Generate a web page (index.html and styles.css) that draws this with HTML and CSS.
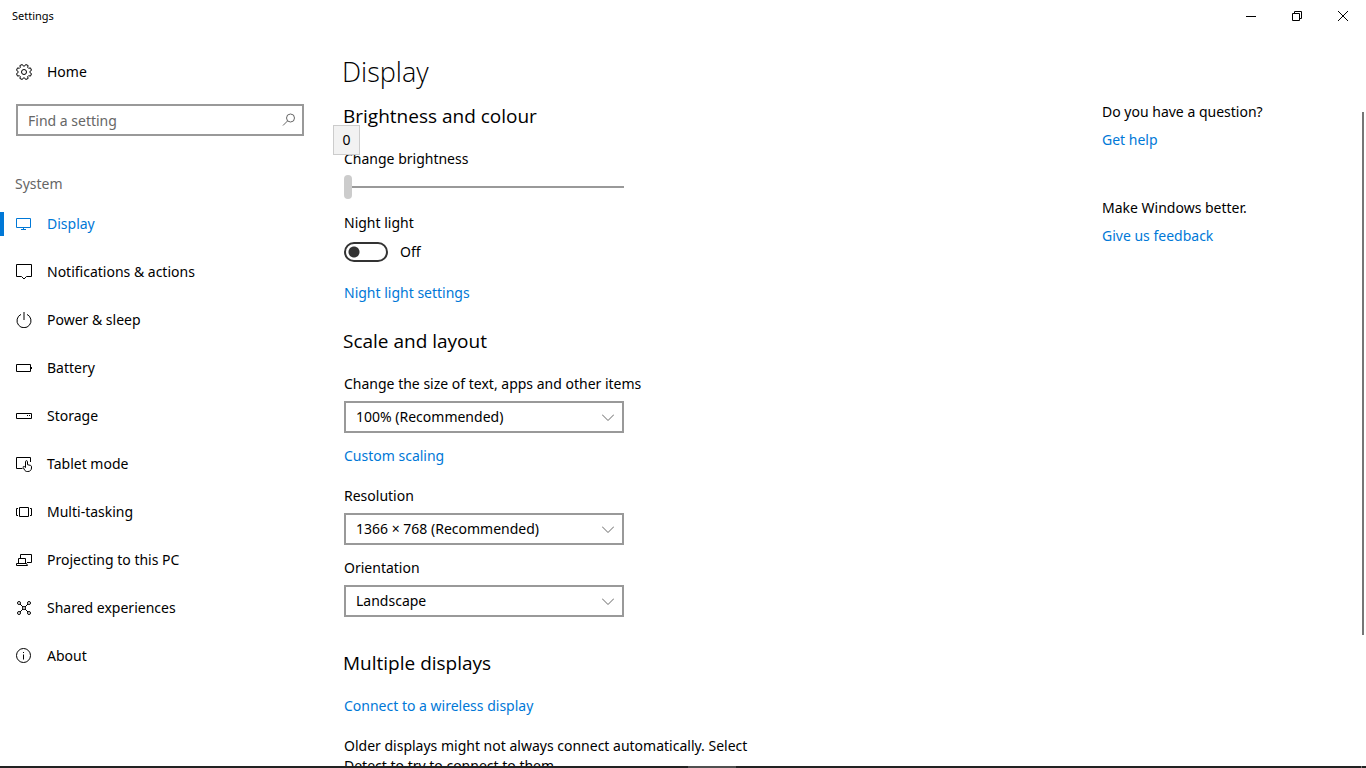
FILE: index.html
```html
<!DOCTYPE html>
<html lang="en-GB">
<head>
    <meta charset="UTF-8">
    <meta name="viewport" content="width=device-width, initial-scale=1.0">
    <title>Settings</title>
    <link rel="stylesheet" href="styles.css">
</head>
<body>
    <header class="titlebar">
        <span class="titlebar-name">Settings</span>
        <div class="window-buttons">
            <button type="button" aria-label="Minimise">
                <svg width="10" height="10" viewBox="0 0 10 10"><path d="M0 5.5h10"/></svg>
            </button>
            <button type="button" aria-label="Restore">
                <svg width="10" height="10" viewBox="0 0 10 10"><path d="M.5 2.5h7v7h-7zM2.5 2.5v-2h7v7h-2"/></svg>
            </button>
            <button type="button" aria-label="Close">
                <svg width="10" height="10" viewBox="0 0 10 10"><path d="M0 0l10 10M10 0L0 10"/></svg>
            </button>
        </div>
    </header>

    <div class="window">
        <aside class="sidebar">
            <a href="#" class="nav-item">
                <svg class="icon" viewBox="0 0 16 16"><path d="M8.6 2.100L9.700.5 12.100 1.500 11.700 3.400 12.600 4.300 14.500 3.900 15.500 6.300 13.900 7.400V8.600L15.500 9.700 14.500 12.100 12.600 11.700 11.700 12.600 12.100 14.500 9.700 15.500 8.600 13.900H7.400L6.300 15.500 3.900 14.500 4.300 12.600 3.400 11.700 1.500 12.100.5 9.700 2.100 8.600V7.400L.5 6.300 1.500 3.900 3.400 4.300 4.300 3.400 3.900 1.500 6.300.5 7.400 2.100z"/><circle cx="8" cy="8" r="2.5"/></svg>
                Home
            </a>
            <div class="search">
                <input type="text" placeholder="Find a setting" aria-label="Find a setting">
                <svg width="14" height="14" viewBox="0 0 14 14"><circle cx="8.5" cy="5" r="4"/><path d="M5.6 7.9L1 12.5"/></svg>
            </div>
            <h2 class="group-name">System</h2>
            <nav>
                <a href="#" class="nav-item active">
                    <svg class="icon" viewBox="0 0 16 16"><path d="M.5 2.5h14v9H.5zM7.5 11.5v2M5 13.5h5"/></svg>
                    Display
                </a>
                <a href="#" class="nav-item">
                    <svg class="icon" viewBox="0 0 16 16"><path d="M.5.5h15v12h-5L8 15l-2.5-2.5h-5z"/></svg>
                    Notifications &amp; actions
                </a>
                <a href="#" class="nav-item">
                    <svg class="icon" viewBox="0 0 16 16"><path d="M5 2.4a7 7 0 1 0 6 0M8 0v8"/></svg>
                    Power &amp; sleep
                </a>
                <a href="#" class="nav-item">
                    <svg class="icon" viewBox="0 0 16 16"><path d="M.5 4.500h14v7H.5zM15.500 7v2"/></svg>
                    Battery
                </a>
                <a href="#" class="nav-item">
                    <svg class="icon" viewBox="0 0 16 16"><path d="M.5 5.500h15v5H.5zM11 7.500h1M13 7.500h1"/></svg>
                    Storage
                </a>
                <a href="#" class="nav-item">
                    <svg class="icon" viewBox="0 0 16 16"><path d="M6.500 12.500h-6V1.500h14v4.500M9.500 11.500V5.700c0-1.400 2-1.400 2 0v3l3 .7c.8.200 1 .7 1 1.400v1.200c0 2-1.500 3.500-3.500 3.500h-.8c-1.200 0-2-.5-2.600-1.500L7.200 11.500c-.4-1 .7-1.600 1.400-.8l.9.8"/></svg>
                    Tablet mode
                </a>
                <a href="#" class="nav-item">
                    <svg class="icon" viewBox="0 0 16 16"><path d="M3.500 3.500h9v9h-9zM2 4.500H.5v7H2M14 4.500h1.500v7H14"/></svg>
                    Multi-tasking
                </a>
                <a href="#" class="nav-item">
                    <svg class="icon" viewBox="0 0 16 16"><path d="M4.500 6V2.500h11v8H11M2.500 12V6.500h7V12M.5 11.500h10l1 2H.5z"/></svg>
                    Projecting to this PC
                </a>
                <a href="#" class="nav-item">
                    <svg class="icon" viewBox="0 0 16 16"><circle cx="3" cy="3" r="1.5"/><circle cx="13" cy="3" r="1.5"/><circle cx="3" cy="13" r="1.5"/><circle cx="13" cy="13" r="1.5"/><circle cx="8" cy="8" r="1.5"/><path d="M4 4l3 3M12 4L9 7M4 12l3-3M12 12L9 9"/></svg>
                    Shared experiences
                </a>
                <a href="#" class="nav-item">
                    <svg class="icon" viewBox="0 0 16 16"><circle cx="7.5" cy="7.5" r="7"/><path d="M7.500 6.500v5M7.500 4v1"/></svg>
                    About
                </a>
            </nav>
        </aside>

        <div class="content">
            <h1>Display</h1>
            <div class="columns">
                <main>
                    <section>
                        <h2>Brightness and colour</h2>
                        <div class="slider">
                            <label for="brightness">Change brightness</label>
                            <input type="range" id="brightness" min="0" max="100" value="0">
                            <output class="tooltip" for="brightness">0</output>
                        </div>
                        <label for="nightLight">Night light</label>
                        <div class="toggle">
                            <input type="checkbox" id="nightLight">
                            <span>Off</span>
                        </div>
                        <a href="#">Night light settings</a>
                    </section>

                    <section>
                        <h2>Scale and layout</h2>
                        <label for="scale">Change the size of text, apps and other items</label>
                        <div class="select">
                            <select id="scale"><option>100% (Recommended)</option></select>
                            <svg width="12" height="7" viewBox="0 0 12 7"><path d="M0 .5l6 6 6-6"/></svg>
                        </div>
                        <a href="#" class="scaling">Custom scaling</a>
                        <label for="resolution">Resolution</label>
                        <div class="select">
                            <select id="resolution"><option>1366 × 768 (Recommended)</option></select>
                            <svg width="12" height="7" viewBox="0 0 12 7"><path d="M0 .5l6 6 6-6"/></svg>
                        </div>
                        <label for="orientation">Orientation</label>
                        <div class="select">
                            <select id="orientation"><option>Landscape</option></select>
                            <svg width="12" height="7" viewBox="0 0 12 7"><path d="M0 .5l6 6 6-6"/></svg>
                        </div>
                    </section>

                    <section>
                        <h2>Multiple displays</h2>
                        <a href="#">Connect to a wireless display</a>
                        <p>Older displays might not always connect automatically. Select Detect to try to connect to them.</p>
                    </section>
                </main>

                <aside class="help">
                    <p>Do you have a question?</p>
                    <a href="#">Get help</a>
                    <p>Make Windows better.</p>
                    <a href="#">Give us feedback</a>
                </aside>
            </div>
        </div>

        <div class="scrollbar"><div class="thumb"></div></div>
    </div>

    <footer class="taskbar"><span class="task"></span><span class="edge"></span></footer>
</body>
</html>
```
FILE: styles.css
```css
* {
    box-sizing: border-box;
}
body {
    display: flex;
    flex-direction: column;
    height: 100vh;
    margin: 0;
    overflow: hidden;
    background: #fff;
    color: #000;
    font: 14px/20px "Noto Sans", "Open Sans", sans-serif;
}
h1, h2, p {
    margin: 0;
    font-weight: 400;
}
a {
    color: #0078d7;
    text-decoration: none;
}
svg {
    fill: none;
    stroke: currentColor;
    stroke-width: 1;
}
input, select, button {
    margin: 0;
    font: inherit;
    color: inherit;
}

/* title bar */
.titlebar {
    display: flex;
    justify-content: space-between;
    align-items: center;
    flex: none;
    height: 32px;
    padding-left: 12px;
    font-size: 11px;
}
.window-buttons {
    display: flex;
}
.window-buttons button {
    display: flex;
    align-items: center;
    justify-content: center;
    width: 46px;
    height: 32px;
    padding: 0;
    border: none;
    background: none;
}
.window {
    display: flex;
    flex: 1;
    min-height: 0;
}

/* sidebar */
.sidebar {
    flex: none;
    width: 320px;
    padding-top: 16px;
}
.nav-item {
    display: flex;
    align-items: center;
    gap: 15px;
    height: 48px;
    padding-left: 16px;
    color: #000;
}
.nav-item.active {
    color: #0078d7;
    background: linear-gradient(#0078d7, #0078d7) no-repeat left center / 4px 24px;
}
.icon {
    flex: none;
    width: 16px;
    height: 16px;
}
.search {
    position: relative;
    margin: 8px 16px 36px;
}
.search input {
    display: block;
    width: 100%;
    height: 32px;
    padding: 0 32px 0 10px;
    border: 2px solid #999;
    background: #fff;
}
.search input::placeholder {
    color: #666;
    opacity: 1;
}
.search svg {
    position: absolute;
    top: 9px;
    right: 8px;
    color: #666;
}
.group-name {
    margin: 0 15px 4px;
    color: #666;
    font-size: 14px;
    line-height: 24px;
}

/* page */
.content {
    display: flex;
    flex-direction: column;
    flex: 1;
    padding: 20px 0 0 24px;
}
.content h1 {
    flex: none;
    margin: 0 -2px 10px;
    font-family: "Open Sans", sans-serif;
    font-size: 27px;
    font-weight: 300;
    line-height: 40px;
}
.columns {
    display: flex;
    justify-content: space-between;
    flex: 1;
    min-height: 0;
}
main {
    width: 432px;
    overflow-y: auto;
    scrollbar-width: none;
    margin-left: -12px;
    padding-left: 12px;
}
main h2 {
    margin: 0 -1px 19px;
    font-family: "Open Sans", sans-serif;
    font-size: 19px;
    line-height: 28px;
}
section {
    margin-bottom: 24px;
}
section + section {
    margin-bottom: 32px;
}
main label, main a {
    display: block;
}
.slider {
    position: relative;
    width: 280px;
    margin-bottom: 14px;
}
.slider input {
    display: block;
    width: 100%;
    height: 24px;
    margin-top: 6px;
    appearance: none;
    background: linear-gradient(#999, #999) no-repeat center / 100% 2px;
}
.slider input::-webkit-slider-thumb {
    appearance: none;
    width: 8px;
    height: 24px;
    border-radius: 4px;
    background: #ccc;
}
.tooltip {
    position: absolute;
    top: -24px;
    left: -11px;
    width: 27px;
    padding: 4px 0;
    border: 1px solid #ccc;
    background: #f2f2f2;
    text-align: center;
}
.toggle {
    display: flex;
    align-items: center;
    gap: 12px;
    margin: 9px 0 21px;
}
.toggle input {
    width: 44px;
    height: 20px;
    border: 2px solid #333;
    border-radius: 10px;
    appearance: none;
    background: radial-gradient(circle at 8px 8px, #333 5px, transparent 6px);
}
.select {
    position: relative;
    width: 280px;
    margin: 7px 0 13px;
}
.select select {
    display: block;
    width: 100%;
    height: 32px;
    padding: 0 32px 0 10px;
    border: 2px solid #999;
    border-radius: 0;
    appearance: none;
    background: #fff;
}
.select svg {
    position: absolute;
    top: 13px;
    right: 10px;
    color: #666;
    pointer-events: none;
}
main .scaling {
    margin-bottom: 20px;
}
main p {
    margin-top: 20px;
}
.help {
    flex: none;
    width: 260px;
}
.help p {
    margin-bottom: 8px;
}
.help a {
    display: block;
    margin-bottom: 48px;
}

/* scroll bar */
.scrollbar {
    flex: none;
    width: 4px;
    padding-top: 80px;
}
.thumb {
    width: 2px;
    height: 80%;
    background: #767676;
}

/* top edge of the taskbar */
.taskbar {
    display: flex;
    justify-content: space-between;
    flex: none;
    height: 2px;
    padding: 0 4px 0 50.4%;
    background: #222;
}
.task {
    width: 48px;
    background: #505050;
}
.edge {
    width: 1px;
    background: #777;
}
```
